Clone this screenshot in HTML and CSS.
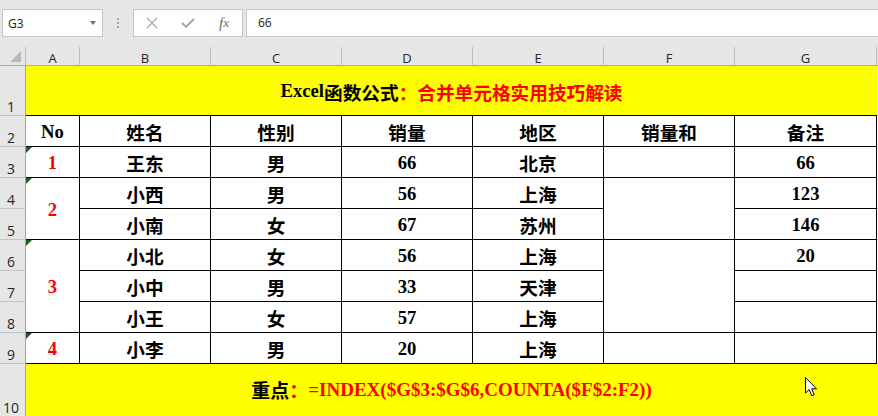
FILE: index.html
```html
<!DOCTYPE html>
<html lang="zh-CN">
<head>
<meta charset="utf-8">
<title>Excel</title>
<link rel="stylesheet" href="styles.css">
</head>
<body>
<div class="app">
  <div class="toolbar">
    <div class="namebox"><span>G3</span><span class="caret"></span></div>
    <div class="grip"><i></i><i></i><i></i></div>
    <div class="btns">
      <span class="btn"><svg width="12" height="12" viewBox="0 0 12 12"><path d="M1 1 L11 11 M11 1 L1 11" stroke="#a8a8a8" stroke-width="1.3" fill="none"/></svg></span>
      <span class="btn"><svg width="14" height="10" viewBox="0 0 14 10"><path d="M1 5 L5 8.8 L13 1" stroke="#a8a8a8" stroke-width="2" fill="none"/></svg></span>
      <span class="btn fx"><i>f</i><i class="x">x</i></span>
    </div>
    <div class="formula">66</div>
  </div>

  <div class="sheet">
    <div class="corner"><span class="tri"></span></div>
    <div class="ch">A</div><div class="ch">B</div><div class="ch">C</div><div class="ch">D</div><div class="ch">E</div><div class="ch">F</div><div class="ch">G</div><div class="ch end"></div>

    <div class="rh">1</div>
    <div class="title span7"><b class="lat">Excel</b><span class="zh">函数公式</span><span class="zh red">：合并单元格实用技巧解读</span></div>
    <div class="h"></div>

    <div class="rh">2</div>
    <div class="c num">No</div><div class="c zh">姓名</div><div class="c zh">性别</div><div class="c zh">销量</div><div class="c zh">地区</div><div class="c zh">销量和</div><div class="c zh">备注</div><div class="h"></div>

    <div class="rh">3</div>
    <div class="c num red flag">1</div><div class="c zh">王东</div><div class="c zh">男</div><div class="c num">66</div><div class="c zh">北京</div><div class="c"></div><div class="c num">66</div><div class="h"></div>

    <div class="rh">4</div>
    <div class="c num red flag r2">2</div><div class="c zh">小西</div><div class="c zh">男</div><div class="c num">56</div><div class="c zh">上海</div><div class="c r2"></div><div class="c num">123</div><div class="h"></div>

    <div class="rh">5</div>
    <div class="c zh">小南</div><div class="c zh">女</div><div class="c num">67</div><div class="c zh">苏州</div><div class="c num">146</div><div class="h"></div>

    <div class="rh">6</div>
    <div class="c num red flag r3">3</div><div class="c zh">小北</div><div class="c zh">女</div><div class="c num">56</div><div class="c zh">上海</div><div class="c r3"></div><div class="c num">20</div><div class="h"></div>

    <div class="rh">7</div>
    <div class="c zh">小中</div><div class="c zh">男</div><div class="c num">33</div><div class="c zh">天津</div><div class="c"></div><div class="h"></div>

    <div class="rh">8</div>
    <div class="c zh">小王</div><div class="c zh">女</div><div class="c num">57</div><div class="c zh">上海</div><div class="c"></div><div class="h"></div>

    <div class="rh">9</div>
    <div class="c num red flag">4</div><div class="c zh">小李</div><div class="c zh">男</div><div class="c num">20</div><div class="c zh">上海</div><div class="c"></div><div class="c"></div><div class="h"></div>

    <div class="rh last">10</div>
    <div class="note span7"><span class="zh">重点</span><span class="zh red">：</span><b class="lat red">=INDEX($G$3:$G$6,COUNTA($F$2:F2))</b></div>
    <div class="h yel"></div>
  </div>

  <svg class="cursor" width="13" height="20" viewBox="0 0 13 20"><path d="M0.5 0.5 L0.5 16 L4.2 12.6 L6.8 18.8 L9.2 17.8 L6.7 11.8 L11.5 11.8 Z" fill="#fff" stroke="#000" stroke-width="1"/></svg>
</div>
</body>
</html>
```

FILE: styles.css
```css
html, body {
  margin: 0;
  padding: 0;
}
body {
  width: 878px;
  height: 416px;
  overflow: hidden;
  background: #e6e6e6;
  font-family: "Open Sans", "Noto Sans", sans-serif;
}
.app {
  position: relative;
  width: 878px;
  height: 416px;
  overflow: hidden;
}

/* toolbar */
.toolbar {
  height: 47px;
  box-sizing: border-box;
  padding-top: 9px;
  display: flex;
  align-items: flex-start;
}
.namebox {
  margin-left: 2px;
  width: 101px;
  height: 28px;
  box-sizing: border-box;
  border: 1px solid #c6c6c6;
  background: #fff;
  display: flex;
  align-items: center;
  justify-content: space-between;
  padding: 0 6px 0 5px;
  font-size: 12px;
  color: #222;
}
.caret {
  width: 0;
  height: 0;
  border-left: 3.5px solid transparent;
  border-right: 3.5px solid transparent;
  border-top: 4px solid #707070;
}
.grip {
  width: 2px;
  height: 28px;
  margin: 0 14px;
  display: flex;
  flex-direction: column;
  justify-content: center;
  gap: 2px;
}
.grip i {
  display: block;
  width: 2px;
  height: 2px;
  background: #a9a9a9;
}
.btns {
  width: 110px;
  height: 28px;
  box-sizing: border-box;
  border: 1px solid #c6c6c6;
  background: #fff;
  display: flex;
  align-items: center;
}
.btn {
  width: 36px;
  height: 26px;
  display: flex;
  align-items: center;
  justify-content: center;
}
.fx {
  font-family: "Liberation Serif", serif;
  font-size: 15px;
  color: #6a6a6a;
}
.fx i.x {
  font-size: 13px;
}
.formula {
  margin-left: 3px;
  flex: 1;
  height: 28px;
  box-sizing: border-box;
  border: 1px solid #c6c6c6;
  border-right: none;
  background: #fff;
  padding-left: 11px;
  font-size: 12px;
  line-height: 26px;
  color: #222;
}

/* sheet */
.sheet {
  display: grid;
  grid-template-columns: 26px 54px 131px 131px 131px 131px 131px 142px 1fr;
  grid-template-rows: 19px 50px repeat(8, 31px) 52px;
  background: #fff;
}
.corner {
  background: #e6e6e6;
  border-right: 1px solid #bcbcbc;
  border-bottom: 1px solid #ababab;
  position: relative;
}
.tri {
  position: absolute;
  left: 10px;
  top: 4px;
  width: 0;
  height: 0;
  border-left: 11px solid transparent;
  border-bottom: 11px solid #b9b9b9;
}
.ch {
  background: #e6e6e6;
  border-right: 1px solid #bcbcbc;
  border-bottom: 1px solid #ababab;
  display: flex;
  align-items: flex-end;
  justify-content: center;
  font-size: 13px;
  line-height: 13px;
  color: #262626;
}
.ch.end {
  border-right: none;
}
.rh {
  background: #e6e6e6;
  border-right: 1px solid #a3a3a3;
  border-bottom: 1px solid #c4c4c4;
  display: flex;
  align-items: flex-end;
  justify-content: center;
  padding-right: 3px;
  padding-bottom: 1px;
  font-size: 14px;
  line-height: 14px;
  color: #262626;
}
.rh.last {
  border-bottom: none;
}
.h {
  border-bottom: 1px solid #d4d4d4;
}
.h.yel {
  background: #ffff00;
  border-bottom: none;
}

.c {
  border-right: 1px solid #000;
  border-bottom: 1px solid #000;
  display: flex;
  align-items: center;
  justify-content: center;
  font-size: 18.67px;
  color: #000;
  position: relative;
}
.c.num {
  padding-top: 2px;
}
.r2 { grid-row: span 2; }
.r3 { grid-row: span 3; }
.span7 { grid-column: span 7; }

.zh {
  font-family: "Noto Sans CJK SC", sans-serif;
  font-weight: 700;
}
.num, .lat {
  font-family: "Liberation Serif", "Noto Sans CJK SC", serif;
  font-weight: 700;
}
.red {
  color: #ff0000;
}
.flag::before {
  content: "";
  position: absolute;
  left: 0;
  top: 0;
  width: 0;
  height: 0;
  border-top: 6px solid #1f5a2a;
  border-right: 6px solid transparent;
}

.title {
  background: #ffff00;
  border-bottom: 1px solid #000;
  display: flex;
  align-items: center;
  justify-content: center;
  font-size: 18.67px;
  color: #000;
  padding-top: 1px;
}
.note {
  background: #ffff00;
  display: flex;
  align-items: center;
  justify-content: center;
  font-size: 19px;
  color: #000;
  padding-bottom: 1px;
}

.cursor {
  position: absolute;
  left: 805px;
  top: 377px;
}
```
